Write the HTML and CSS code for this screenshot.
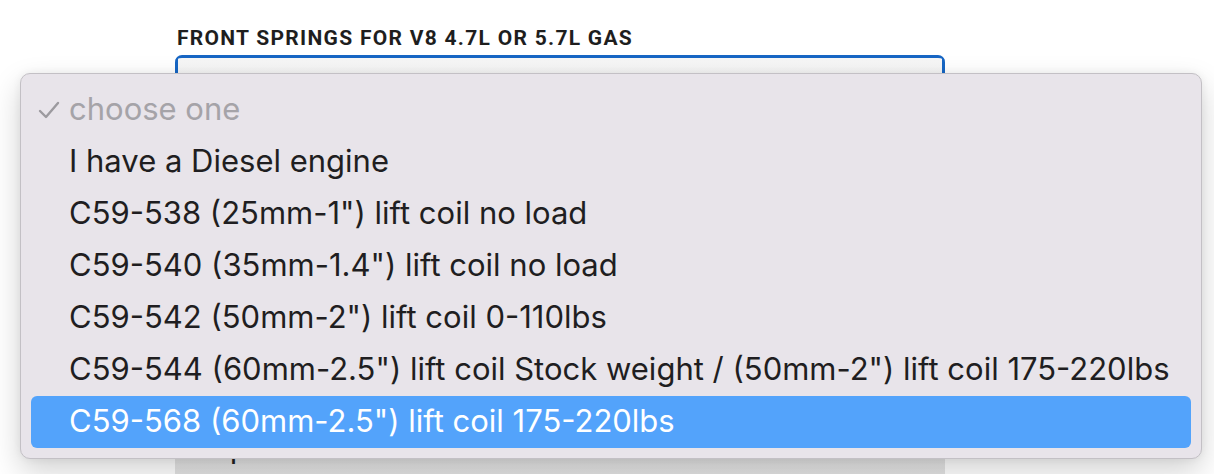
FILE: index.html
```html
<!DOCTYPE html>
<html>
<head>
<meta charset="utf-8">
<link rel="stylesheet" href="styles.css">
</head>
<body>
<div class="field">
  <div class="label">FRONT SPRINGS FOR V8 4.7L OR 5.7L GAS</div>
  <div class="select"><span class="select-value">choose one</span></div>
</div>
<div class="menu">
  <div class="item disabled"><svg class="check" viewBox="0 0 22 18" width="22" height="18"><path d="M2 10 L8 16 L20 2" fill="none" stroke="currentColor" stroke-width="2.4" stroke-linecap="round" stroke-linejoin="round"/></svg>choose one</div>
  <div class="item">I have a Diesel engine</div>
  <div class="item">C59-538 (25mm-1") lift coil no load</div>
  <div class="item">C59-540 (35mm-1.4") lift coil no load</div>
  <div class="item">C59-542 (50mm-2") lift coil 0-110lbs</div>
  <div class="item">C59-544 (60mm-2.5") lift coil Stock weight / (50mm-2") lift coil 175-220lbs</div>
  <div class="item selected">C59-568 (60mm-2.5") lift coil 175-220lbs</div>
</div>
</body>
</html>
```

FILE: styles.css
```css
html, body {
  margin: 0;
  padding: 0;
  background: #ffffff;
  overflow: hidden;
  height: 474px;
}
body {
  position: relative;
  font-family: Inter, "Noto Sans", sans-serif;
}
.field {
  padding: 26px 0 0 175px;
  width: 770px;
}
.label {
  font-family: Roboto, "Liberation Sans", sans-serif;
  font-weight: 700;
  font-size: 21px;
  color: #1e1e1e;
  letter-spacing: 1.28px;
  padding-left: 2px;
  height: 26px;
  line-height: 24px;
}
.select {
  margin-top: 3px;
  height: 440px;
  border-top: 3px solid #1766c4;
  border-radius: 7px 7px 0 0;
  background:
    linear-gradient(#1766c4, #1766c4) left top / 3px 60px no-repeat,
    linear-gradient(#1766c4, #1766c4) right top / 3px 60px no-repeat,
    linear-gradient(#f6f6f6, #e6e6e6 90%, #e0e0e0);
  box-sizing: border-box;
  overflow: hidden;
}
.select-value {
  display: block;
  margin: 397px 0 0 37px;
  font-size: 31px;
  color: #222;
  line-height: 31px;
  height: 9px;
  overflow: hidden;
}
.menu {
  position: absolute;
  left: 20px;
  top: 73px;
  width: 1182px;
  box-sizing: border-box;
  padding: 10px;
  background: #e8e4ea;
  border: 1px solid #c3c0c5;
  border-radius: 10px;
  box-shadow: 0 12px 30px rgba(0,0,0,0.18), 0 0 8px rgba(0,0,0,0.06);
}
.item {
  height: 52px;
  display: flex;
  align-items: center;
  padding: 0 0 3px 38px;
  box-sizing: border-box;
  position: relative;
  font-size: 31px;
  color: #1f1e21;
  border-radius: 6px;
  white-space: nowrap;
}
.item.disabled {
  color: #a5a3a8;
}
.check {
  position: absolute;
  left: 7px;
  top: 17px;
  color: #9c9a9f;
}
.item.selected {
  background: #53a3fb;
  color: #ffffff;
}
```
